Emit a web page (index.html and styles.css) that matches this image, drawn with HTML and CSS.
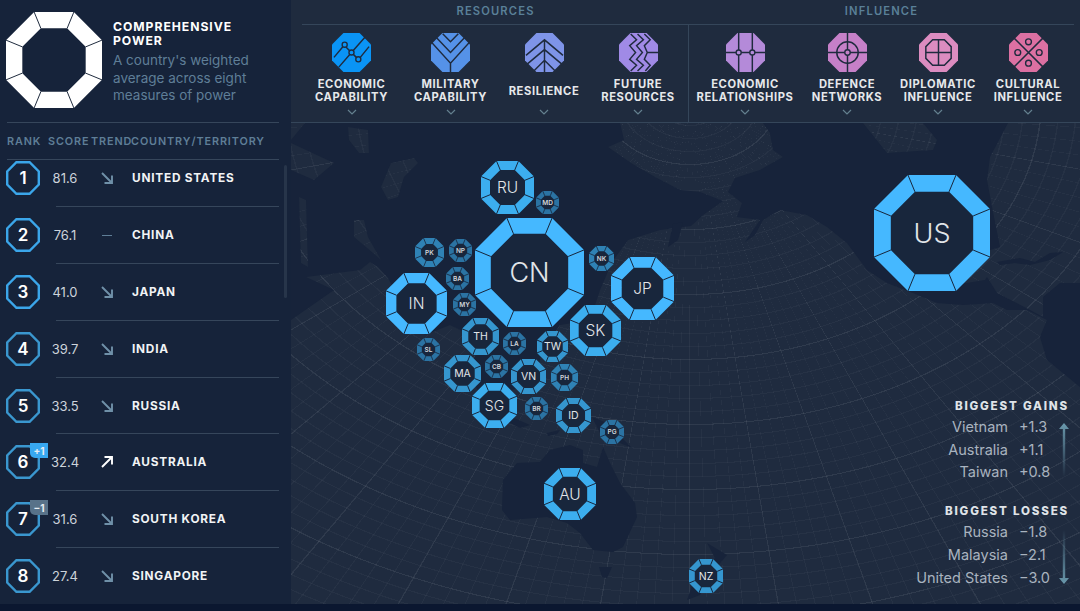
FILE: index.html
```html
<!DOCTYPE html>
<html lang="en">
<head>
<meta charset="utf-8">
<title>Comprehensive Power</title>
<link rel="stylesheet" href="styles.css">
</head>
<body>
<svg class="defs" aria-hidden="true">
  <defs>
    <symbol id="ring-l" viewBox="0 0 100 100">
      <polygon class="core" points="35.3,14.5 64.7,14.5 85.5,35.3 85.5,64.7 64.7,85.5 35.3,85.5 14.5,64.7 14.5,35.3"/>
      <path class="band" fill-rule="evenodd" d="M29.3 0H70.7L100 29.3V70.7L70.7 100H29.3L0 70.7V29.3ZM35.3 14.5L14.5 35.3V64.7L35.3 85.5H64.7L85.5 64.7V35.3L64.7 14.5Z"/>
      <path class="seam" d="M29.3 0L35.3 14.5M70.7 0L64.7 14.5M100 29.3L85.5 35.3M100 70.7L85.5 64.7M70.7 100L64.7 85.5M29.3 100L35.3 85.5M0 70.7L14.5 64.7M0 29.3L14.5 35.3"/>
    </symbol>
    <symbol id="ring-m" viewBox="0 0 100 100">
      <polygon class="core" points="36.3,17 63.7,17 83,36.3 83,63.7 63.7,83 36.3,83 17,63.7 17,36.3"/>
      <path class="band" fill-rule="evenodd" d="M29.3 0H70.7L100 29.3V70.7L70.7 100H29.3L0 70.7V29.3ZM36.3 17L17 36.3V63.7L36.3 83H63.7L83 63.7V36.3L63.7 17Z"/>
      <path class="seam" d="M29.3 0L36.3 17M70.7 0L63.7 17M100 29.3L83 36.3M100 70.7L83 63.7M70.7 100L63.7 83M29.3 100L36.3 83M0 70.7L17 63.7M0 29.3L17 36.3"/>
    </symbol>
    <symbol id="ring-s" viewBox="0 0 100 100">
      <polygon class="core" points="38,21 62,21 79,38 79,62 62,79 38,79 21,62 21,38"/>
      <path class="band" fill-rule="evenodd" d="M29.3 0H70.7L100 29.3V70.7L70.7 100H29.3L0 70.7V29.3ZM38 21L21 38V62L38 79H62L79 62V38L62 21Z"/>
      <path class="seam" d="M29.3 0L38 21M70.7 0L62 21M100 29.3L79 38M100 70.7L79 62M70.7 100L62 79M29.3 100L38 79M0 70.7L21 62M0 29.3L21 38"/>
    </symbol>
    <symbol id="rank-oct" viewBox="0 0 34 34">
      <polygon class="rank-line" points="10.4,1.2 23.6,1.2 32.8,10.4 32.8,23.6 23.6,32.8 10.4,32.8 1.2,23.6 1.2,10.4"/>
    </symbol>
    <symbol id="trend-down" viewBox="0 0 14 14">
      <path class="trend-line" d="M2 2L12 12M12 4.5V12H4.5"/>
    </symbol>
    <symbol id="trend-up" viewBox="0 0 14 14">
      <path class="trend-line" d="M2 12L12 2M4.5 2H12V9.5"/>
    </symbol>
    <symbol id="chev" viewBox="0 0 10 6">
      <path class="chev-line" d="M1 1L5 5L9 1"/>
    </symbol>
  </defs>
</svg>

<div class="app">
  <aside class="sidebar">
    <div class="intro">
      <svg class="logo"><use href="#ring-m"/></svg>
      <div class="intro-text">
        <h1 class="intro-title">COMPREHENSIVE<br>POWER</h1>
        <p class="intro-sub">A country's weighted average across eight measures of power</p>
      </div>
    </div>
    <div class="thead">
      <span class="th-rank">RANK</span><span class="th-score">SCORE</span><span class="th-trend">TREND</span><span>COUNTRY/TERRITORY</span>
    </div>
    <ol class="rows">
      <li class="row bright"><div class="rank"><svg class="rank-oct"><use href="#rank-oct"/></svg><b>1</b></div><span class="score">81.6</span><svg class="trend down"><use href="#trend-down"/></svg><span class="name">UNITED STATES</span></li>
      <li class="row bright"><div class="rank"><svg class="rank-oct"><use href="#rank-oct"/></svg><b>2</b></div><span class="score">76.1</span><i class="flat"></i><span class="name">CHINA</span></li>
      <li class="row bright"><div class="rank"><svg class="rank-oct"><use href="#rank-oct"/></svg><b>3</b></div><span class="score">41.0</span><svg class="trend down"><use href="#trend-down"/></svg><span class="name">JAPAN</span></li>
      <li class="row"><div class="rank"><svg class="rank-oct"><use href="#rank-oct"/></svg><b>4</b></div><span class="score">39.7</span><svg class="trend down"><use href="#trend-down"/></svg><span class="name">INDIA</span></li>
      <li class="row"><div class="rank"><svg class="rank-oct"><use href="#rank-oct"/></svg><b>5</b></div><span class="score">33.5</span><svg class="trend down"><use href="#trend-down"/></svg><span class="name">RUSSIA</span></li>
      <li class="row"><div class="rank"><svg class="rank-oct"><use href="#rank-oct"/></svg><b>6</b><em class="badge gain">+1</em></div><span class="score">32.4</span><svg class="trend up"><use href="#trend-up"/></svg><span class="name">AUSTRALIA</span></li>
      <li class="row"><div class="rank"><svg class="rank-oct"><use href="#rank-oct"/></svg><b>7</b><em class="badge loss">−1</em></div><span class="score">31.6</span><svg class="trend down"><use href="#trend-down"/></svg><span class="name">SOUTH KOREA</span></li>
      <li class="row"><div class="rank"><svg class="rank-oct"><use href="#rank-oct"/></svg><b>8</b></div><span class="score">27.4</span><svg class="trend down"><use href="#trend-down"/></svg><span class="name">SINGAPORE</span></li>
    </ol>
    <div class="thumb"></div>
  </aside>

  <main class="main">
    <header class="tabs">
      <section class="group group-res">
        <h2 class="group-title">RESOURCES</h2>
        <div class="group-items">
          <div class="tab">
            <svg class="tab-icon i1" viewBox="0 0 40 40"><polygon class="oct" points="11.7,0 28.3,0 40,11.7 40,28.3 28.3,40 11.7,40 0,28.3 0,11.7"/><path class="cut" d="M2 25L12 13M14 14L25.5 25.5M29 25L38 14M7 35L20 20L34 4"/><circle class="dot" cx="13" cy="12" r="2.6"/><circle class="dot" cx="20" cy="20" r="2.6"/><circle class="dot" cx="27" cy="27" r="2.6"/></svg>
            <div class="tab-label">ECONOMIC<br>CAPABILITY</div>
            <svg class="chev"><use href="#chev"/></svg>
          </div>
          <div class="tab">
            <svg class="tab-icon i2" viewBox="0 0 40 40"><polygon class="oct" points="11.7,0 28.3,0 40,11.7 40,28.3 28.3,40 11.7,40 0,28.3 0,11.7"/><path class="cut" d="M0 9L20 31L40 9M5 4L20 20L35 4M12 0.7L20 9L28 0.7M20 31V40"/></svg>
            <div class="tab-label">MILITARY<br>CAPABILITY</div>
            <svg class="chev"><use href="#chev"/></svg>
          </div>
          <div class="tab">
            <svg class="tab-icon i3" viewBox="0 0 40 40"><polygon class="oct" points="11.7,0 28.3,0 40,11.7 40,28.3 28.3,40 11.7,40 0,28.3 0,11.7"/><path class="cut" d="M20 7V40M1 23L20 7L39 23M1 33L20 17L39 33M8 40L20 28L32 40"/></svg>
            <div class="tab-label">RESILIENCE</div>
            <svg class="chev"><use href="#chev"/></svg>
          </div>
          <div class="tab">
            <svg class="tab-icon i4" viewBox="0 0 40 40"><polygon class="oct" points="11.7,0 28.3,0 40,11.7 40,28.3 28.3,40 11.7,40 0,28.3 0,11.7"/><path class="cut" d="M12 1L18 7L11 13L17 20L11 27L18 33L12 39M19 1L25 7L18 13L24 20L18 27L25 33L19 39M26 1L32 7L26 13L29 20L26 27L32 33L27 39M29 20H40"/></svg>
            <div class="tab-label">FUTURE<br>RESOURCES</div>
            <svg class="chev"><use href="#chev"/></svg>
          </div>
        </div>
      </section>
      <section class="group group-inf">
        <h2 class="group-title">INFLUENCE</h2>
        <div class="group-items">
          <div class="tab">
            <svg class="tab-icon i5" viewBox="0 0 40 40"><polygon class="oct" points="11.7,0 28.3,0 40,11.7 40,28.3 28.3,40 11.7,40 0,28.3 0,11.7"/><path class="cut" d="M13 0V40M27 0V40M0 20H40"/><circle class="dot" cx="13" cy="20" r="2.6"/><circle class="dot" cx="27" cy="20" r="2.6"/></svg>
            <div class="tab-label">ECONOMIC<br>RELATIONSHIPS</div>
            <svg class="chev"><use href="#chev"/></svg>
          </div>
          <div class="tab">
            <svg class="tab-icon i6" viewBox="0 0 40 40"><polygon class="oct" points="11.7,0 28.3,0 40,11.7 40,28.3 28.3,40 11.7,40 0,28.3 0,11.7"/><path class="cut" d="M20 0V40M0 20H40"/><circle class="ringline" cx="20" cy="20" r="11"/><circle class="dot" cx="20" cy="20" r="2.8"/></svg>
            <div class="tab-label">DEFENCE<br>NETWORKS</div>
            <svg class="chev"><use href="#chev"/></svg>
          </div>
          <div class="tab">
            <svg class="tab-icon i7" viewBox="0 0 40 40"><polygon class="oct" points="11.7,0 28.3,0 40,11.7 40,28.3 28.3,40 11.7,40 0,28.3 0,11.7"/><path class="cut" d="M14 7H26L33 14V26L26 33H14L7 26V14ZM20 7V33M7 20H33"/></svg>
            <div class="tab-label">DIPLOMATIC<br>INFLUENCE</div>
            <svg class="chev"><use href="#chev"/></svg>
          </div>
          <div class="tab">
            <svg class="tab-icon i8" viewBox="0 0 40 40"><polygon class="oct" points="11.7,0 28.3,0 40,11.7 40,28.3 28.3,40 11.7,40 0,28.3 0,11.7"/><path class="cut" d="M5 5L35 35M35 5L5 35"/><circle class="dot" cx="20" cy="9" r="3"/><circle class="dot" cx="9" cy="20" r="3"/><circle class="dot" cx="31" cy="20" r="3"/><circle class="dot" cx="20" cy="31" r="3"/></svg>
            <div class="tab-label">CULTURAL<br>INFLUENCE</div>
            <svg class="chev"><use href="#chev"/></svg>
          </div>
        </div>
      </section>
    </header>

    <div class="map">
      <svg class="land" viewBox="291 123 789 481" aria-hidden="true">
        <path fill-rule="evenodd" d="M305 123L620 123L624 140L608 147L631 163L655 177L680 190L700 192L723 201L703 215L691 226L660 230L628 240L612 262L600 290L590 320L560 325L545 345L535 375L525 385L500 395L490 410L480 395L470 375L478 345L470 335L450 325L425 335L405 310L388 278L378 267L370 262L360 270L306 277L334 290L291 320L291 140ZM291 143L334 163L314 180L291 170ZM348 127L368 130L369 153L359 153L349 140ZM381 187L391 163L414 158L418 163L404 177L398 197L388 200ZM354 220L364 220L368 237L381 260L373 253L354 237ZM299 197L306 200L308 267L301 263Z"/>
        <path fill-rule="evenodd" d="M763 123L1008 123L990 157L987 180L992 207L1000 247L990 250L965 255L945 265L945 275L955 285L985 280L987 277L997 293L1030 310L1043 317L1043 297L1060 283L1080 283L1080 387L1047 360L1040 337L1047 320L1027 310L1007 310L993 303L963 305L937 303L913 293L887 283L867 270L847 243L827 227L807 215L780 210L763 220L755 235L745 242L760 220L737 217L742 203L728 192L735 178L760 170L783 157L773 150L770 133ZM863 123L887 153L933 150L937 140L923 123Z"/>
        <path d="M997 262L1020 258L1035 262L1050 253L1063 252L1050 260L1030 265L1015 263L1000 265Z"/>
        <path d="M503 480L517 463L540 462L550 450L570 445L583 450L583 463L597 467L603 447L610 463L620 483L635 503L637 517L623 547L613 552L593 550L580 533L567 523L547 517L510 520L502 510Z"/>
        <path d="M599 567L612 567L607 578L602 577Z"/>
        <path d="M707 543L727 555L717 567L700 595L687 600L693 583L700 573L715 558Z"/>
        <path d="M592 417L607 423L632 448L620 443L600 433Z"/>
        <path d="M547 433L560 430L557 434L548 436Z"/>
        <path d="M495 410L530 425L520 428L495 415Z"/>
        <path d="M673 224L683 222L678 240L668 247Z"/>
      </svg>

      <div class="node tier-a big n-us"><svg class="ring"><use href="#ring-l"/></svg><span>US</span></div>
      <div class="node tier-a big n-cn"><svg class="ring"><use href="#ring-l"/></svg><span>CN</span></div>
      <div class="node tier-b mid n-ru"><svg class="ring"><use href="#ring-m"/></svg><span>RU</span></div>
      <div class="node tier-a mid n-jp"><svg class="ring"><use href="#ring-m"/></svg><span>JP</span></div>
      <div class="node tier-a mid n-in"><svg class="ring"><use href="#ring-m"/></svg><span>IN</span></div>
      <div class="node tier-b mid n-sk"><svg class="ring"><use href="#ring-m"/></svg><span>SK</span></div>
      <div class="node tier-b mid n-au"><svg class="ring"><use href="#ring-m"/></svg><span>AU</span></div>
      <div class="node tier-b mid n-sg"><svg class="ring"><use href="#ring-m"/></svg><span>SG</span></div>
      <div class="node tier-c low n-th"><svg class="ring"><use href="#ring-m"/></svg><span>TH</span></div>
      <div class="node tier-c low n-ma"><svg class="ring"><use href="#ring-m"/></svg><span>MA</span></div>
      <div class="node tier-c low n-vn"><svg class="ring"><use href="#ring-m"/></svg><span>VN</span></div>
      <div class="node tier-c low n-tw"><svg class="ring"><use href="#ring-m"/></svg><span>TW</span></div>
      <div class="node tier-c low n-id"><svg class="ring"><use href="#ring-m"/></svg><span>ID</span></div>
      <div class="node tier-c low n-nz"><svg class="ring"><use href="#ring-m"/></svg><span>NZ</span></div>
      <div class="node tier-d tiny n-pk"><svg class="ring"><use href="#ring-s"/></svg><span>PK</span></div>
      <div class="node tier-d tiny n-ph"><svg class="ring"><use href="#ring-s"/></svg><span>PH</span></div>
      <div class="node tier-d tiny n-nk"><svg class="ring"><use href="#ring-s"/></svg><span>NK</span></div>
      <div class="node tier-e tiny n-md"><svg class="ring"><use href="#ring-s"/></svg><span>MD</span></div>
      <div class="node tier-e tiny n-np"><svg class="ring"><use href="#ring-s"/></svg><span>NP</span></div>
      <div class="node tier-e tiny n-ba"><svg class="ring"><use href="#ring-s"/></svg><span>BA</span></div>
      <div class="node tier-e tiny n-my"><svg class="ring"><use href="#ring-s"/></svg><span>MY</span></div>
      <div class="node tier-e tiny n-la"><svg class="ring"><use href="#ring-s"/></svg><span>LA</span></div>
      <div class="node tier-e tiny n-sl"><svg class="ring"><use href="#ring-s"/></svg><span>SL</span></div>
      <div class="node tier-e tiny n-cb"><svg class="ring"><use href="#ring-s"/></svg><span>CB</span></div>
      <div class="node tier-e tiny n-br"><svg class="ring"><use href="#ring-s"/></svg><span>BR</span></div>
      <div class="node tier-e tiny n-pg"><svg class="ring"><use href="#ring-s"/></svg><span>PG</span></div>

      <aside class="movers">
        <h3 class="movers-title">BIGGEST GAINS</h3>
        <dl class="movers-list">
          <dt>Vietnam</dt><dd>+1.3</dd>
          <dt>Australia</dt><dd>+1.1</dd>
          <dt>Taiwan</dt><dd>+0.8</dd>
        </dl>
        <svg class="mover-arrow arrow-up" viewBox="0 0 12 54"><defs><linearGradient id="fade-up" x1="0" y1="0" x2="0" y2="1"><stop offset="0" stop-color="#6a99ad"/><stop offset="1" stop-color="#6a99ad" stop-opacity="0"/></linearGradient></defs><path fill="url(#fade-up)" d="M6 0L11 6H7.2V54H4.8V6H1Z"/></svg>
        <h3 class="movers-title losses">BIGGEST LOSSES</h3>
        <dl class="movers-list">
          <dt>Russia</dt><dd>−1.8</dd>
          <dt>Malaysia</dt><dd>−2.1</dd>
          <dt>United States</dt><dd>−3.0</dd>
        </dl>
        <svg class="mover-arrow arrow-down" viewBox="0 0 12 54"><defs><linearGradient id="fade-down" x1="0" y1="1" x2="0" y2="0"><stop offset="0" stop-color="#6a99ad"/><stop offset="1" stop-color="#6a99ad" stop-opacity="0"/></linearGradient></defs><path fill="url(#fade-down)" d="M6 54L11 48H7.2V0H4.8V48H1Z"/></svg>
      </aside>
    </div>
  </main>
</div>
<div class="strip"></div>
</body>
</html>
```

FILE: styles.css
```css
* { box-sizing: border-box; }

html, body {
  margin: 0;
  padding: 0;
  height: 100%;
  overflow: hidden;
}

body {
  background: #0b1730;
  color: #fff;
  font-family: Inter, "Liberation Sans", sans-serif;
  display: flex;
  flex-direction: column;
}

.defs { position: absolute; width: 0; height: 0; }

.app {
  display: flex;
  height: 604px;
  flex: none;
}

.strip { flex: 1; background: #0b1730; }

/* ring symbols */
.core { fill: var(--core, #18263c); }
.band { fill: currentColor; }
.seam {
  fill: none;
  stroke: var(--seam, #17253b);
  stroke-width: var(--seam-w, 1);
  vector-effect: non-scaling-stroke;
}

/* sidebar */
.sidebar {
  position: relative;
  width: 291px;
  flex: none;
  background: #16233a;
  overflow: hidden;
}

.intro {
  display: flex;
  height: 123px;
  margin: 0 12px 0 7px;
  padding-top: 12px;
  border-bottom: 1px solid #36465b;
}

.logo {
  width: 96px;
  height: 96px;
  margin-left: -1px;
  flex: none;
  color: #fff;
  --core: #16233a;
  --seam: #1f2b3e;
}

.intro-text { margin-left: 11px; padding-top: 8px; }

.intro-title {
  margin: 0;
  font-size: 12.2px;
  line-height: 13.5px;
  font-weight: 700;
  letter-spacing: 0.95px;
}

.intro-sub {
  margin: 5px 0 0;
  width: 146px;
  font-size: 13.5px;
  line-height: 17.5px;
  color: #5f7e97;
}

.thead {
  display: flex;
  align-items: center;
  height: 37px;
  margin: 0 12px 0 7px;
  border-bottom: 1px solid #36465b;
  font-size: 10.8px;
  font-weight: 600;
  letter-spacing: 0.92px;
  color: #5f7e97;
}

.th-rank { width: 41px; }
.th-score { width: 43px; }
.th-trend { width: 40px; }

.rows { list-style: none; margin: 0; padding: 0; }

.row {
  position: relative;
  display: grid;
  grid-template-columns: 42px 34px 50px 1fr;
  align-items: center;
  height: 56.86px;
  padding: 11px 0 11.86px 6px;
  --rank: #3a97cf;
}

.row:first-child { height: 47px; padding: 1px 0 12px 6px; }
.row.bright { --rank: #3ba6ea; }

.row::after {
  content: "";
  position: absolute;
  left: 56px;
  right: 12px;
  bottom: 0;
  height: 1px;
  background: #36465b;
}

.rank {
  position: relative;
  width: 34px;
  height: 34px;
  display: flex;
  align-items: center;
  justify-content: center;
}

.rank-oct { position: absolute; inset: 0; width: 34px; height: 34px; }
.rank-line { fill: none; stroke: var(--rank); stroke-width: 2.4; }
.rank b { position: relative; font-size: 17px; font-weight: 600; }

.badge {
  position: absolute;
  left: 24px;
  top: -2px;
  width: 18px;
  height: 15px;
  display: flex;
  align-items: center;
  justify-content: center;
  font-style: normal;
  font-size: 10px;
  font-weight: 700;
  color: #e6edf3;
  border-bottom-left-radius: 5px;
}

.gain { background: #38a8f0; }
.loss { background: #587289; }

.score {
  text-align: center;
  font-size: 13px;
  color: #cdd3da;
}

.trend { width: 14px; height: 14px; margin-left: 18px; }
.trend-line { fill: none; stroke: currentColor; stroke-width: 1.9; }
.down { color: #6f90a8; }
.up { color: #fff; }

.flat {
  display: block;
  width: 10px;
  height: 1px;
  margin-left: 20px;
  background: #5f7e97;
}

.name {
  font-size: 11.8px;
  font-weight: 700;
  letter-spacing: 0.78px;
  color: #f1f3f5;
  white-space: nowrap;
}

.thumb {
  position: absolute;
  left: 284px;
  top: 165px;
  width: 3px;
  height: 133px;
  background: #27354a;
  border-radius: 2px;
}

/* main */
.main {
  flex: 1;
  min-width: 0;
  display: flex;
  flex-direction: column;
  background: #1f2b3f;
}

.tabs {
  display: flex;
  height: 123px;
  flex: none;
  padding-left: 11px;
  background: #1f2b3e;
  border-bottom: 1px solid #35465a;
}

.group { display: flex; flex-direction: column; }
.group-res { width: 387px; }
.group-inf { width: 385px; }

.group-title {
  margin: 0;
  height: 25px;
  flex: none;
  border-bottom: 1px solid #35465a;
  font-size: 11.2px;
  line-height: 23px;
  font-weight: 600;
  letter-spacing: 1.15px;
  text-align: center;
  color: #5a8098;
}

.group-items { display: grid; flex: 1; }
.group-res .group-items {
  grid-template-columns: 99px 99px 88px 100px;
  border-right: 1px solid #35465a;
}
.group-inf .group-items { grid-template-columns: 112px 92px 90px 90px; }

.tab {
  display: flex;
  flex-direction: column;
  align-items: center;
  padding-top: 8px;
}

.tab-icon { width: 39px; height: 39px; flex: none; }
.oct { fill: var(--tab); }
.cut { fill: none; stroke: #1f2b3e; stroke-width: 1.5; }
.dot { fill: var(--tab); stroke: #1f2b3e; stroke-width: 1.4; }
.ringline { fill: none; stroke: #1f2b3e; stroke-width: 1.5; }

.i1 { --tab: #0a94f5; }
.i2 { --tab: #5592e8; }
.i3 { --tab: #7e94e8; }
.i4 { --tab: #a08ae6; }
.i5 { --tab: #b48ad9; }
.i6 { --tab: #c680c8; }
.i7 { --tab: #dc8cc0; }
.i8 { --tab: #dc70a2; }

.tab-label {
  height: 26px;
  margin-top: 6px;
  display: flex;
  align-items: center;
  justify-content: center;
  text-align: center;
  font-size: 11.2px;
  line-height: 13px;
  font-weight: 700;
  letter-spacing: 0.62px;
  white-space: nowrap;
  color: #e6e8eb;
}

.chev { width: 10px; height: 6px; margin-top: 5px; flex: none; }
.chev-line { fill: none; stroke: #64808f; stroke-width: 1.2; }

/* map */
.map {
  position: relative;
  flex: 1;
  overflow: hidden;
  background-color: #1f2b3f;
  background-image:
    repeating-radial-gradient(ellipse 88px 65px at 399px -23px, transparent 0 98.4%, rgba(255,255,255,.045) 98.4% 100%),
    repeating-radial-gradient(ellipse 17.6px 13px at 399px -23px, transparent 0 92%, rgba(255,255,255,.03) 92% 100%),
    repeating-conic-gradient(from 0deg at 399px -23px, rgba(255,255,255,.045) 0 .14deg, transparent .14deg 10deg),
    repeating-conic-gradient(from 0deg at 399px -23px, rgba(255,255,255,.03) 0 .1deg, transparent .1deg 2deg);
}

.land {
  position: absolute;
  left: 0;
  top: 0;
  width: 789px;
  height: 481px;
  fill: #17233a;
}

.node {
  position: absolute;
  display: flex;
  align-items: center;
  justify-content: center;
  aspect-ratio: 1;
}

.ring { position: absolute; inset: 0; width: 100%; height: 100%; }
.node span { position: relative; color: #e2e5e9; }

.tier-a { color: #45b8ff; }
.tier-b { color: #3caeef; }
.tier-c { color: #3596cf; }
.tier-d { color: #2f82b5; }
.tier-e { color: #2b73a3; }

.big span { font-size: 27px; font-weight: 300; }
.mid span { font-size: 15.5px; font-weight: 300; }
.low span { font-size: 10.5px; }
.tiny { --seam-w: .8; }
.tiny span { font-size: 6.5px; font-weight: 600; color: #d2d6db; }

.n-us { left: 583px; top: 52px; width: 116px; }
.n-cn { left: 184px; top: 95px; width: 109px; }
.n-ru { left: 190px; top: 38px; width: 53px; }
.n-jp { left: 320px; top: 134px; width: 63px; }
.n-in { left: 95px; top: 150px; width: 61px; }
.n-sk { left: 279px; top: 182px; width: 51px; }
.n-au { left: 253px; top: 345px; width: 52px; }
.n-sg { left: 181px; top: 260px; width: 45px; }
.n-sg span { font-size: 14px; }
.n-th { left: 171px; top: 195px; width: 37px; }
.n-ma { left: 153px; top: 232px; width: 37px; }
.n-vn { left: 220px; top: 236px; width: 35px; }
.n-tw { left: 246px; top: 208px; width: 31px; }
.n-id { left: 265px; top: 275px; width: 35px; }
.n-nz { left: 398px; top: 436px; width: 34px; }
.n-pk { left: 124px; top: 115px; width: 29px; }
.n-ph { left: 260px; top: 241px; width: 27px; }
.n-nk { left: 298px; top: 123px; width: 25px; }
.n-md { left: 245px; top: 68px; width: 23px; }
.n-np { left: 158px; top: 116px; width: 23px; }
.n-ba { left: 155px; top: 144px; width: 23px; }
.n-my { left: 162px; top: 170px; width: 23px; }
.n-la { left: 212px; top: 209px; width: 23px; }
.n-sl { left: 126px; top: 215px; width: 23px; }
.n-cb { left: 194px; top: 232px; width: 23px; }
.n-br { left: 234px; top: 274px; width: 23px; }
.n-pg { left: 309px; top: 297px; width: 24px; }

/* movers */
.movers {
  position: absolute;
  right: 11px;
  top: 276px;
  width: 170px;
  text-align: right;
}

.movers-title {
  margin: 0;
  height: 16px;
  font-size: 11.6px;
  line-height: 14px;
  font-weight: 800;
  letter-spacing: 1.8px;
  color: #dfe3e8;
}

.losses { margin-top: 21px; }

.movers-list {
  display: grid;
  grid-template-columns: 1fr 61px;
  grid-auto-rows: 22.8px;
  align-items: center;
  margin: 0;
  font-size: 14.5px;
  color: #a9b3bf;
}

.movers-list dt { text-align: right; }
.movers-list dd { margin: 0; padding-left: 11px; text-align: left; }

.mover-arrow {
  position: absolute;
  right: -1px;
  width: 12px;
  height: 54px;
}

.arrow-up { top: 24px; }
.arrow-down { top: 131px; }
```
